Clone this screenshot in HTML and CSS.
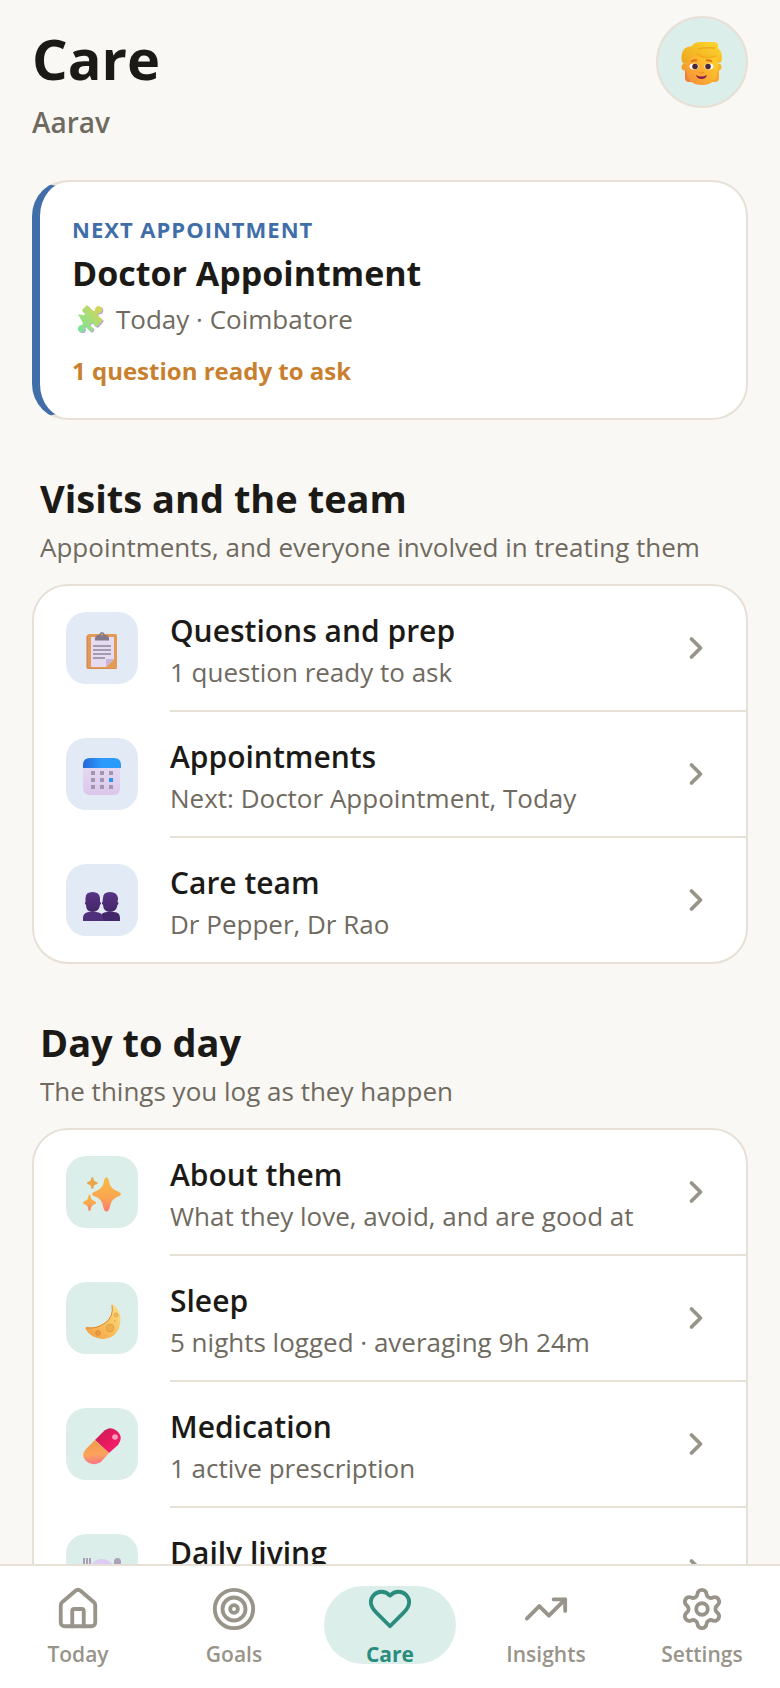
FILE: index.html
```html
<!DOCTYPE html>
<html lang="en">
<head>
  <meta charset="UTF-8" />
  <meta name="viewport" content="width=device-width, initial-scale=1.0"/>
  <title>Care</title>
  <link rel="stylesheet" href="styles.css">
</head>

<body>
  <main class="content">
    <!-- Header -->
    <header class="page-header">
      <div class="page-title">
        <h1>Care</h1>
        <p>Aarav</p>
      </div>
      <button class="avatar" type="button" aria-label="Profile">
        <svg width="42" height="44" viewBox="0 0 42 44">
          <defs>
            <linearGradient id="face" x1="1" y1="0" x2="0" y2="1"><stop offset="0.2" stop-color="#ffca28"/><stop offset="1" stop-color="#f58a3c"/></linearGradient>
            <linearGradient id="hair" x1="0" y1="1" x2="1" y2="0"><stop offset="0" stop-color="#eba21f"/><stop offset="1" stop-color="#ffd92e"/></linearGradient>
          </defs>
          <path d="M4 28v8q0 4 4 4h6V28z" fill="#ee7f3a"/>
          <path d="M38 28v8q0 4-4 4h-6V28z" fill="#fba62c"/>
          <circle cx="4" cy="25" r="3.500" fill="#f0a02c"/>
          <circle cx="37" cy="25" r="3.500" fill="#fbb524"/>
          <path d="M5 18Q5 8 21 8t16 10v8q0 17-16 17T5 26z" fill="url(#face)"/>
          <path d="M1 20Q-2 5 11 4q2-4 8-4h14q5 0 4 6 4 3 4 10 0 4-2 5l-3-1q0-4-1-6-10 2-20-2-7 3-9 9l-3 1z" fill="url(#hair)"/>
          <path d="M15 12q10 6 20 2" fill="none" stroke="#f2ac20" stroke-width="1.500"/>
          <path d="M17 7q8-2 17-1" fill="none" stroke="#efaa1d" stroke-width="1.500"/>
          <ellipse cx="13" cy="24.500" rx="4.500" ry="3" fill="#fff"/>
          <ellipse cx="28" cy="24.500" rx="4.500" ry="3" fill="#fff"/>
          <circle cx="14" cy="24.500" r="2.800" fill="#4a2638"/>
          <circle cx="27" cy="24.500" r="2.800" fill="#4a2638"/>
          <path d="M10 19.500q3-2 6-1M25 18.500q3-1 6 1" fill="none" stroke="#d9701f" stroke-width="2"/>
          <path d="M18 30q3 2 5 0" fill="none" stroke="#ee8f25" stroke-width="1.500"/>
          <path d="M15 33q5 3 11 0-1 4-5.500 4T15 33z" fill="#8c1d54"/>
        </svg>
      </button>
    </header>

    <!-- Next appointment -->
    <a class="next-card" href="#appointment">
      <span class="next-label">NEXT APPOINTMENT</span>
      <strong class="next-title">Doctor Appointment</strong>
      <span class="next-meta">
        <svg width="36" height="28" viewBox="0 0 36 28">
          <defs>
            <linearGradient id="puzzle" x1="1" y1="0" x2="0" y2="1"><stop offset="0.1" stop-color="#d6d457"/><stop offset="1" stop-color="#70e89a"/></linearGradient>
          </defs>
          <path d="M5 9l4 1q3 1 3-1t-2-2l-1-2 5-5 5 5q2 2 3 0 0-4 4-4 4 1 3 5-1 3-4 2-1 2 0 3l5 4-5 6q-2 2-4-1-2-4-4-1-1 2 2 3 2 1 1 3l-2 2-6-6q-1 1 0 3-1 4-4 3-4-1-3-4 1-3 4-3l1-2z" fill="#bda0dc" transform="translate(2 1)"/>
          <path d="M5 9l4 1q3 1 3-1t-2-2l-1-2 5-5 5 5q2 2 3 0 0-4 4-4 4 1 3 5-1 3-4 2-1 2 0 3l5 4-5 6q-2 2-4-1-2-4-4-1-1 2 2 3 2 1 1 3l-2 2-6-6q-1 1 0 3-1 4-4 3-4-1-3-4 1-3 4-3l1-2z" fill="url(#puzzle)" transform="translate(1 0)"/>
        </svg>
        Today · Coimbatore
      </span>
      <span class="next-note">1 question ready to ask</span>
    </a>

    <!-- Visits and the team -->
    <section>
      <div class="section-head">
        <h2>Visits and the team</h2>
        <p>Appointments, and everyone involved in treating them</p>
      </div>
      <div class="list">
        <a class="row" href="#questions">
          <span class="tile blue">
            <svg width="38" height="38" viewBox="0 0 38 38">
              <rect x="4" y="3" width="30" height="35" rx="2" fill="#e39a55"/>
              <path d="M4 5v31q0 2 2 2h28" fill="none" stroke="#c9804f" stroke-width="1"/>
              <path d="M8 6h23v22l-8 8H9q-1 0-1-1z" fill="#e6dcf2"/>
              <path d="M31 28h-7q-1 0-1 1v7z" fill="#c6b7d6"/>
              <path d="M12 8q0-4 4-4 1-3 3-3t3 3q4 0 4 4v1.500H12z" fill="#84788a"/>
              <circle cx="19" cy="3.500" r="1" fill="#e9a765"/>
              <path d="M10 15h18M10 19h18M10 23h18M10 27h12" stroke="#a49cae" stroke-width="2"/>
            </svg>
          </span>
          <span class="row-body">
            <span class="row-text">
              <span class="row-title">Questions and prep</span>
              <span class="row-sub">1 question ready to ask</span>
            </span>
            <svg class="chevron" viewBox="0 0 24 24"><path d="m9 18 6-6-6-6"/></svg>
          </span>
        </a>
        <a class="row" href="#appointments">
          <span class="tile blue">
            <svg width="38" height="38" viewBox="0 0 38 38">
              <defs>
                <linearGradient id="calTop" x1="0" y1="0" x2="1" y2="0"><stop offset="0" stop-color="#2766d8"/><stop offset="0.5" stop-color="#2b9bfb"/><stop offset="1" stop-color="#2b9bfb"/></linearGradient>
                <linearGradient id="calBody" x1="0" y1="0" x2="0" y2="1"><stop offset="0" stop-color="#e4d9f0"/><stop offset="1" stop-color="#dcc6ec"/></linearGradient>
              </defs>
              <path d="M0 10h37v21q0 7-6 7H7q-7 0-7-7z" fill="url(#calBody)"/>
              <path d="M0 11V8q0-7 7-7h24q7 0 7 7v3z" fill="url(#calTop)"/>
              <path d="M8 14h4v4H8zM17 14h4v4h-4zM26 14h4v4h-4zM8 21h4v4H8zM17 21h4v4h-4zM8 28h4v4H8zM17 28h4v4h-4zM26 28h4v4h-4z" fill="#a195b0"/>
              <path d="M26 21h4v4h-4z" fill="#2b92ee"/>
            </svg>
          </span>
          <span class="row-body">
            <span class="row-text">
              <span class="row-title">Appointments</span>
              <span class="row-sub">Next: Doctor Appointment, Today</span>
            </span>
            <svg class="chevron" viewBox="0 0 24 24"><path d="m9 18 6-6-6-6"/></svg>
          </span>
        </a>
        <a class="row" href="#team">
          <span class="tile blue">
            <svg width="38" height="38" viewBox="0 0 38 38">
              <defs>
                <linearGradient id="people" x1="0" y1="0" x2="0" y2="1"><stop offset="0" stop-color="#593486"/><stop offset="1" stop-color="#432567"/></linearGradient>
              </defs>
              <path d="M17 38v-3q1-6 7-6h7q6 0 6 6v3z" fill="#44276a"/>
              <path d="M20 15q0-6 7-6t8 6q0 2-.500 4 2 1 0 3-1 7-7.500 7T20 22q-2-2-.500-3z" fill="url(#people)"/>
              <path d="M0 38v-4q1-5 7-5h6q6 0 7 6v3z" fill="#50307a"/>
              <path d="M2.500 15q0-6 7-6t7.500 6v4q2 1 0 3-1 7-7.500 7T3 22q-2-2-.500-3z" fill="url(#people)"/>
            </svg>
          </span>
          <span class="row-body">
            <span class="row-text">
              <span class="row-title">Care team</span>
              <span class="row-sub">Dr Pepper, Dr Rao</span>
            </span>
            <svg class="chevron" viewBox="0 0 24 24"><path d="m9 18 6-6-6-6"/></svg>
          </span>
        </a>
      </div>
    </section>

    <!-- Day to day -->
    <section>
      <div class="section-head">
        <h2>Day to day</h2>
        <p>The things you log as they happen</p>
      </div>
      <div class="list">
        <a class="row" href="#about">
          <span class="tile green">
            <svg width="38" height="38" viewBox="0 0 38 38">
              <defs>
                <linearGradient id="spark" x1="0" y1="0" x2="0" y2="1"><stop offset="0.1" stop-color="#f6b844"/><stop offset="0.6" stop-color="#fba552"/><stop offset="1" stop-color="#fb7a6c"/></linearGradient>
              </defs>
              <path d="M23.500 2.500q2 0 2.500 4 1 7 9 10 3 1 3 2.500t-3 2.500q-7 3-8 10-1 5-3.500 5T20 31q-1-7-8-9.500-3-1-3-2.500t3-2.500q8-3 9-10 .500-4 2.500-4z" fill="url(#spark)"/>
              <path d="M9.300 2q1.200 0 1.400 2.500 0 1.500 2 2 2 .500 2 1.500t-2 1.500-2 2q-.200 2.500-1.400 2.500t-1.400-2.500q0-1.500-2-2T4 8t2-1.500 2-2Q8.200 2 9.300 2z" fill="#eaa64c"/>
              <path d="M6.500 19.500q1.200 0 1.600 3.500.4 2 3 3 2 .6 2 1.700t-2 1.700q-2.600 1-3 3-.4 3.500-1.600 3.500T5 32.400q-.4-2-3-3-2-.6-2-1.700t2-1.700q2.600-1 3-3 .4-3.500 1.500-3.500z" fill="url(#spark)"/>
            </svg>
          </span>
          <span class="row-body">
            <span class="row-text">
              <span class="row-title">About them</span>
              <span class="row-sub">What they love, avoid, and are good at</span>
            </span>
            <svg class="chevron" viewBox="0 0 24 24"><path d="m9 18 6-6-6-6"/></svg>
          </span>
        </a>
        <a class="row" href="#sleep">
          <span class="tile green">
            <svg width="38" height="38" viewBox="0 0 38 38">
              <defs>
                <linearGradient id="moon" x1="1" y1="0" x2="0" y2="1"><stop offset="0" stop-color="#fbe18c"/><stop offset="0.5" stop-color="#f8c05a"/><stop offset="1" stop-color="#f59a45"/></linearGradient>
              </defs>
              <path d="M29.500 3.500q1-1 2 1 6 6 6 14.500-1 18-18 19-12-1-17-10-.500-2 1.500-2 10 2 19-5 8-8 6.500-17.500z" fill="url(#moon)"/>
              <path d="M29 4q2 12-7 18-8 6-19 5" fill="none" stroke="#d98a3a" stroke-width="1"/>
              <circle cx="27" cy="27" r="3.800" fill="#eeb04d" stroke="#e39d43"/>
              <circle cx="33" cy="14" r="2" fill="#f2bd59" stroke="#e5a94c"/>
              <circle cx="15" cy="32" r="2.300" fill="#ee9d44" stroke="#dc8838"/>
              <circle cx="32" cy="20" r="1" fill="#e9ae51"/>
            </svg>
          </span>
          <span class="row-body">
            <span class="row-text">
              <span class="row-title">Sleep</span>
              <span class="row-sub">5 nights logged · averaging 9h 24m</span>
            </span>
            <svg class="chevron" viewBox="0 0 24 24"><path d="m9 18 6-6-6-6"/></svg>
          </span>
        </a>
        <a class="row" href="#medication">
          <span class="tile green">
            <svg width="38" height="38" viewBox="0 0 38 38">
              <defs>
                <linearGradient id="pillTop" x1="0" y1="0" x2="1" y2="1"><stop offset="0" stop-color="#b92350"/><stop offset="0.5" stop-color="#e8195f"/><stop offset="1" stop-color="#fb2476"/></linearGradient>
                <linearGradient id="pillLow" x1="0.300" y1="0" x2="0.400" y2="1"><stop offset="0" stop-color="#ef9a4a"/><stop offset="0.600" stop-color="#fca35c"/><stop offset="1" stop-color="#fc7388"/></linearGradient>
              </defs>
              <path d="M12 13L20 5q7-7 14-1t1 14l-9 8z" fill="url(#pillTop)"/>
              <path d="M12 13l-8 8q-7 7-1 13t15 1l8-9z" fill="url(#pillLow)"/>
              <circle cx="32" cy="10" r="2.800" fill="#ff9dbd"/>
            </svg>
          </span>
          <span class="row-body">
            <span class="row-text">
              <span class="row-title">Medication</span>
              <span class="row-sub">1 active prescription</span>
            </span>
            <svg class="chevron" viewBox="0 0 24 24"><path d="m9 18 6-6-6-6"/></svg>
          </span>
        </a>
        <a class="row" href="#living">
          <span class="tile green">
            <svg width="38" height="38" viewBox="0 0 38 38">
              <circle cx="19" cy="19" r="13" fill="#dccbf3"/>
              <circle cx="19" cy="19" r="8" fill="#cdb9ea"/>
              <path d="M1 5v8M4 5v8M7 5v8M1 12h6M4 13v20" fill="none" stroke="#aaa0b8" stroke-width="2"/>
              <path d="M31 9q0-4 3.500-4T38 9t-2 8v16h-3V17q-2-4-2-8z" fill="#aaa0b8"/>
            </svg>
          </span>
          <span class="row-body">
            <span class="row-text">
              <span class="row-title">Daily living</span>
            </span>
            <svg class="chevron" viewBox="0 0 24 24"><path d="m9 18 6-6-6-6"/></svg>
          </span>
        </a>
      </div>
    </section>
  </main>

  <!-- Bottom navigation -->
  <nav class="tabs">
    <a class="tab" href="#today">
      <svg viewBox="0 0 24 24"><path d="M15 21v-8a1 1 0 0 0-1-1h-4a1 1 0 0 0-1 1v8"/><path d="M3 10a2 2 0 0 1 .709-1.528l7-5.999a2 2 0 0 1 2.582 0l7 5.999A2 2 0 0 1 21 10v9a2 2 0 0 1-2 2H5a2 2 0 0 1-2-2z"/></svg>
      <span>Today</span>
    </a>
    <a class="tab" href="#goals">
      <svg viewBox="0 0 24 24"><circle cx="12" cy="12" r="10"/><circle cx="12" cy="12" r="6"/><circle cx="12" cy="12" r="2"/></svg>
      <span>Goals</span>
    </a>
    <a class="tab active" href="#care" aria-current="page">
      <svg viewBox="0 0 24 24"><path d="M19 14c1.490-1.460 3-3.210 3-5.500A5.500 5.500 0 0 0 16.500 3c-1.760 0-3 .500-4.500 2-1.500-1.500-2.740-2-4.500-2A5.500 5.500 0 0 0 2 8.500c0 2.300 1.500 4.050 3 5.500l7 7Z"/></svg>
      <span>Care</span>
    </a>
    <a class="tab" href="#insights">
      <svg viewBox="0 0 24 24"><path d="M16 7h6v6"/><path d="m22 7-8.500 8.500-5-5L2 17"/></svg>
      <span>Insights</span>
    </a>
    <a class="tab" href="#settings">
      <svg viewBox="0 0 24 24"><path d="M9.671 4.136a2.340 2.340 0 0 1 4.659 0 2.340 2.340 0 0 0 3.319 1.915 2.340 2.340 0 0 1 2.330 4.033 2.340 2.340 0 0 0 0 3.831 2.340 2.340 0 0 1-2.330 4.033 2.340 2.340 0 0 0-3.319 1.915 2.340 2.340 0 0 1-4.659 0 2.340 2.340 0 0 0-3.320-1.915 2.340 2.340 0 0 1-2.330-4.033 2.340 2.340 0 0 0 0-3.831A2.340 2.340 0 0 1 6.350 6.051a2.340 2.340 0 0 0 3.319-1.915"/><circle cx="12" cy="12" r="3"/></svg>
      <span>Settings</span>
    </a>
  </nav>
</body>
</html>
```

FILE: styles.css
```css
/* ===== Reset & Font ===== */
* {
  margin: 0;
  padding: 0;
  box-sizing: border-box;
}
body {
  height: 100vh;
  display: flex;
  flex-direction: column;
  background: #faf8f4;
  color: #1c1a17;
  font-family: "Segoe UI", "Open Sans", sans-serif;
}
a {
  color: inherit;
  text-decoration: none;
}
svg {
  display: block;
  flex-shrink: 0;
}

/* ===== Content ===== */
.content {
  flex: 1;
  min-height: 0;
  overflow-y: auto;
  scrollbar-width: none;
  padding: 16px 32px 32px;
}

/* ===== Header ===== */
.page-header {
  display: flex;
  justify-content: space-between;
  align-items: flex-start;
  margin-bottom: 38px;
}
.page-title {
  padding-top: 6px;
}
.page-title h1 {
  font-size: 56px;
  line-height: 72px;
  font-weight: 700;
}
.page-title p {
  margin-top: 8px;
  font-size: 28px;
  line-height: 40px;
  font-weight: 600;
  color: #6f6a60;
}
.avatar {
  display: flex;
  align-items: center;
  justify-content: center;
  width: 92px;
  height: 92px;
  padding-top: 4px;
  background: #dceeea;
  border: 2px solid #e7e0d6;
  border-radius: 50%;
  cursor: pointer;
}

/* ===== Next appointment ===== */
.next-card {
  display: flex;
  flex-direction: column;
  gap: 3px;
  padding: 30px 32px 28px;
  background: #fff;
  border: 2px solid #e7e0d6;
  border-left: 8px solid #3f6ea8;
  border-radius: 36px;
}
.next-label {
  font-size: 22px;
  line-height: 34px;
  font-weight: 700;
  letter-spacing: 1px;
  color: #3f6ea8;
}
.next-title {
  font-size: 34px;
  line-height: 48px;
  font-weight: 700;
}
.next-meta {
  display: flex;
  align-items: center;
  gap: 8px;
  font-size: 26px;
  line-height: 38px;
  color: #6f6a60;
}
.next-note {
  margin-top: 11px;
  font-size: 24px;
  line-height: 38px;
  font-weight: 700;
  color: #c9802e;
}

/* ===== Sections ===== */
.section-head {
  padding: 52px 8px 18px;
}
.section-head h2 {
  font-size: 38px;
  line-height: 52px;
  font-weight: 700;
}
.section-head p {
  margin-top: 4px;
  font-size: 26px;
  line-height: 38px;
  color: #6f6a60;
}

/* ===== Lists ===== */
.list {
  background: #fff;
  border: 2px solid #e7e0d6;
  border-radius: 36px;
  overflow: hidden;
}
.row {
  display: flex;
  gap: 32px;
  padding-left: 32px;
}
.tile {
  display: flex;
  align-items: center;
  justify-content: center;
  flex-shrink: 0;
  width: 72px;
  height: 72px;
  margin-top: 26px;
  padding-top: 4px;
  border-radius: 20px;
}
.tile.blue {
  background: #e2eaf6;
}
.tile.green {
  background: #dceeea;
}
.row-body {
  flex: 1;
  display: flex;
  align-items: center;
  justify-content: space-between;
  padding: 21px 32px 21px 0;
  border-bottom: 2px solid #e7e0d6;
}
.row:last-child .row-body {
  border-bottom: none;
}
.row-text {
  display: flex;
  flex-direction: column;
  min-height: 82px;
}
.row-title {
  font-size: 30px;
  line-height: 48px;
  font-weight: 600;
}
.row-sub {
  font-size: 26px;
  line-height: 34px;
  color: #6f6a60;
}
.chevron {
  width: 36px;
  height: 36px;
  fill: none;
  stroke: #99948a;
  stroke-width: 2.5;
  stroke-linecap: round;
  stroke-linejoin: round;
}

/* ===== Bottom navigation ===== */
.tabs {
  display: flex;
  padding: 20px 0 24px;
  background: #fff;
  border-top: 2px solid #e7e0d6;
}
.tab {
  flex: 1;
  display: flex;
  flex-direction: column;
  align-items: center;
  gap: 6px;
  height: 78px;
  margin: 0 12px;
  border-radius: 39px;
  font-size: 21px;
  line-height: 32px;
  font-weight: 600;
  color: #99948a;
}
.tab svg {
  width: 46px;
  height: 46px;
  fill: none;
  stroke: currentColor;
  stroke-width: 2;
  stroke-linecap: round;
  stroke-linejoin: round;
}
.tab.active {
  background: #dceeea;
  color: #2a8c7d;
  font-weight: 700;
}
```
